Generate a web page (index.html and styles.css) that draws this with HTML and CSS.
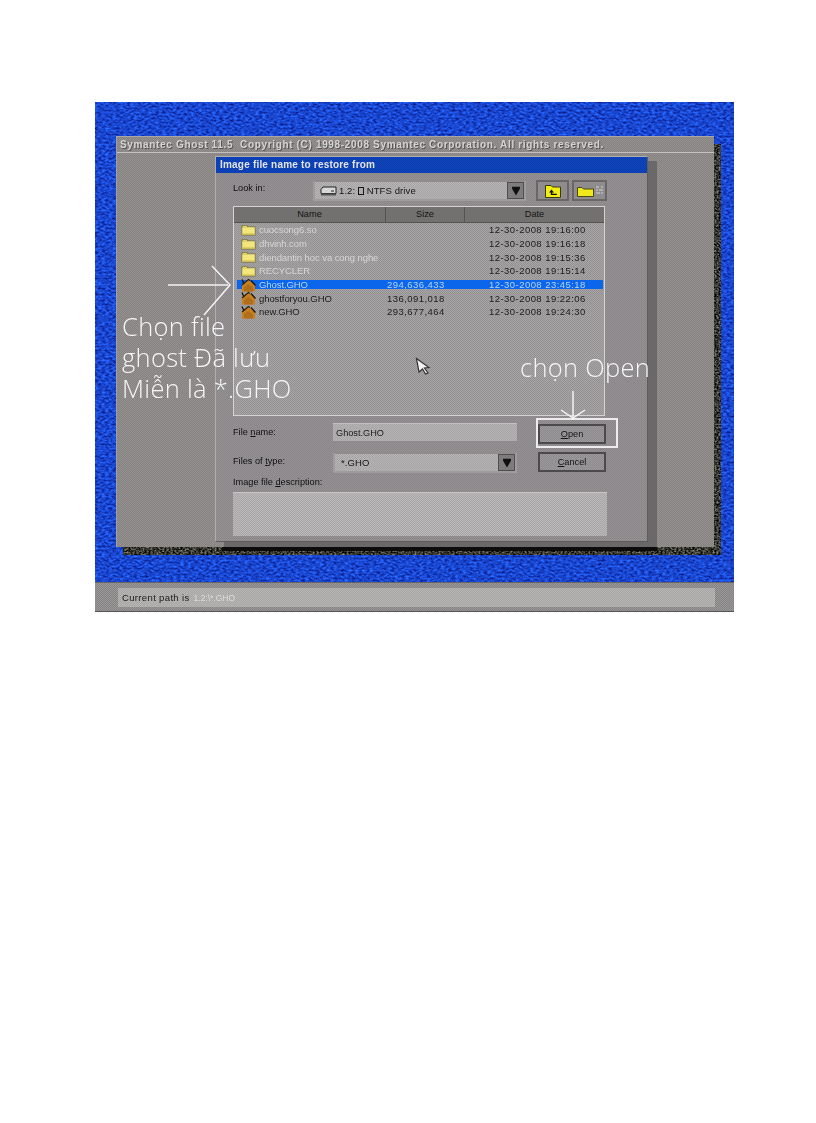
FILE: index.html
```html
<!DOCTYPE html>
<html lang="vi">
<head>
<meta charset="utf-8">
<title>Symantec Ghost</title>
<link rel="stylesheet" href="styles.css">
</head>
<body>
<svg class="defs" width="0" height="0" aria-hidden="true">
  <defs>
    <filter id="grain-blue" x="0" y="0" width="100%" height="100%" color-interpolation-filters="sRGB">
      <feTurbulence type="fractalNoise" baseFrequency=".28 .5" numOctaves="2" seed="7"/>
      <feColorMatrix type="matrix" values=".2 0 0 0 0  .55 0 0 0 0  .9 0 0 0 .36  0 0 0 0 1"/>
    </filter>
    <filter id="grain-dark" x="0" y="0" width="100%" height="100%" color-interpolation-filters="sRGB">
      <feTurbulence type="fractalNoise" baseFrequency=".5 .6" numOctaves="2" seed="3"/>
      <feColorMatrix type="matrix" values="1 0 0 0 -.28  1 0 0 0 -.28  .9 0 0 0 -.26  0 0 0 0 1"/>
    </filter>
  </defs>
  <symbol id="folder" viewBox="0 0 15 12">
    <path d="M0.500 11.500V2L1.500 1h4.500l1 1.500h7.500v9z" fill="#77703a"/>
    <path d="M1.200 10.800V3.200h12.600v7.600z" fill="#f2e67c"/>
    <path d="M1.200 3.200L2 1.800h3.500L6.500 3.200z" fill="#e4d468"/>
    <path d="M1.500 9.500h12v1.300h-12z" fill="#c8b850"/>
  </symbol>
  <symbol id="ghost" viewBox="0 0 15 14">
    <path d="M1 13.500V6.500L7 1.500l7 5.500v6.500z" fill="#c8801f"/>
    <path d="M3 13.500V9l4-3 5 3.500v4z" fill="#b06e1a"/>
    <path d="M1 1.500L3 6" stroke="#1a140a" stroke-width="1.300" fill="none"/>
    <path d="M1 7L7.500 1.500l1.500 1" stroke="#2a1e0c" stroke-width="1.100" fill="none"/>
    <path d="M10 2.500l4.500 5" stroke="#1a140a" stroke-width="1.300" fill="none"/>
  </symbol>
  <symbol id="down" viewBox="0 0 16 16">
    <path d="M3.500 3h9v2.500L8 13 3.500 5.500z" fill="#111"/>
  </symbol>
</svg>

<main class="shot">
  <div class="desktop">
    <section class="window">
      <header class="window-title">Symantec Ghost 11.5&nbsp;&nbsp;Copyright (C) 1998-2008 Symantec Corporation. All rights reserved.</header>
      <div class="window-body">
        <div class="dialog">
          <h1 class="dialog-title">Image file name to restore from</h1>
          <div class="dialog-content">
            <div class="lookin">
              <span class="label">Look in:</span>
              <div class="combo combo-drive">
                <svg class="drive" viewBox="0 0 18 10" width="18" height="10"><path d="M1 3.500L3 1h13v6.500H1z" fill="#d8d8d8" stroke="#222"/><path d="M1 7.500h15v2H1z" fill="#555"/><path d="M11 5h3" stroke="#222"/></svg>
                <span class="combo-text">1.2: <span class="box-glyph"></span> NTFS drive</span>
                <span class="combo-btn"><svg width="14" height="14"><use href="#down"/></svg></span>
              </div>
              <button class="tool tool-up" type="button">
                <svg viewBox="0 0 16 14" width="16" height="14"><path d="M0.500 13.500V1.500H6l1.500 1.500h8v10.500z" fill="#f2ee10" stroke="#3a3a10"/><path d="M6.500 5.500l-2.500 3h1.800v2.500h6v-1.200H7.300V8.500h1.700z" fill="#111"/></svg>
              </button>
              <button class="tool tool-new" type="button">
                <svg viewBox="0 0 26 12" width="26" height="12"><path d="M0.500 11.500V2.500H5L6.500 4h10v7.500z" fill="#f0e818" stroke="#4a4a18"/><path d="M19 2h3M24 2h2M19 5h2M22 5h4M19 8h4M24 8h2" stroke="#bcbcbc" stroke-width="1.400"/></svg>
              </button>
            </div>

            <div class="list">
              <div class="list-head">
                <span class="col-name">Name</span>
                <span class="col-size">Size</span>
                <span class="col-date">Date</span>
              </div>
              <div class="list-rows">
                <div class="row dir"><span class="name"><svg class="ico" width="15" height="12"><use href="#folder"/></svg>cuocsong6.so</span><span></span><span class="date">12-30-2008 19:16:00</span></div>
                <div class="row dir"><span class="name"><svg class="ico" width="15" height="12"><use href="#folder"/></svg>dhvinh.com</span><span></span><span class="date">12-30-2008 19:16:18</span></div>
                <div class="row dir"><span class="name"><svg class="ico" width="15" height="12"><use href="#folder"/></svg>diendantin hoc va cong nghe</span><span></span><span class="date">12-30-2008 19:15:36</span></div>
                <div class="row dir"><span class="name"><svg class="ico" width="15" height="12"><use href="#folder"/></svg>RECYCLER</span><span></span><span class="date">12-30-2008 19:15:14</span></div>
                <div class="row sel"><span class="name"><svg class="ico" width="15" height="14"><use href="#ghost"/></svg>Ghost.GHO</span><span>294,636,433</span><span class="date">12-30-2008 23:45:18</span></div>
                <div class="row"><span class="name"><svg class="ico" width="15" height="14"><use href="#ghost"/></svg>ghostforyou.GHO</span><span>136,091,018</span><span class="date">12-30-2008 19:22:06</span></div>
                <div class="row"><span class="name"><svg class="ico" width="15" height="14"><use href="#ghost"/></svg>new.GHO</span><span>293,677,464</span><span class="date">12-30-2008 19:24:30</span></div>
              </div>
            </div>

            <div class="form">
              <label class="label">File <u>n</u>ame:</label>
              <div class="input">Ghost.GHO</div>
              <button class="btn btn-open" type="button"><u>O</u>pen</button>
              <label class="label">Files of <u>t</u>ype:</label>
              <div class="combo combo-type">
                <span class="combo-text">*.GHO</span>
                <span class="combo-btn"><svg width="14" height="14"><use href="#down"/></svg></span>
              </div>
              <button class="btn btn-cancel" type="button"><u>C</u>ancel</button>
            </div>

            <div class="label desc-label">Image file <u>d</u>escription:</div>
            <div class="desc"></div>
          </div>
        </div>
      </div>
    </section>
  </div>
  <footer class="status">
    <div class="status-field">Current path is <span class="path">1.2:\*.GHO</span></div>
  </footer>

  <div class="note note-file">Chọn file<br>ghost Đã lưu<br>Miễn là *.GHO</div>
  <div class="note note-open">chọn Open</div>
  <div class="open-ring"></div>
  <svg class="arrow arrow-left" width="70" height="52" viewBox="0 0 70 52"><path d="M2 20H62M46 1L64 20 38 50" fill="none" stroke="#f4f4f4" stroke-width="1.500"/></svg>
  <svg class="arrow arrow-down" width="30" height="30" viewBox="0 0 30 30"><path d="M15 1V28M3 20L15 28 27 20" fill="none" stroke="#f4f4f4" stroke-width="1.500"/></svg>
  <svg class="cursor" width="16" height="18" viewBox="0 0 16 18"><path d="M1.500 1.500L14 10.500 9.500 11 13 16 10.500 17 7.500 12 4 15z" fill="#f2f2f2" stroke="#333" stroke-width="1.200"/></svg>
</main>
</body>
</html>
```

FILE: styles.css
```css
* { box-sizing: border-box; }
html, body { margin: 0; padding: 0; background: #fff; }
body { width: 816px; height: 1123px; overflow: hidden; font-family: "Liberation Sans", Arial, sans-serif; }
.defs { position: absolute; }

.shot {
  position: relative;
  width: 639px;
  height: 510px;
  margin: 102px 0 0 95px;
  display: flex;
  flex-direction: column;
}

.desktop {
  position: relative;
  height: 480px;
  padding: 34px 20px 0 21px;
  filter: blur(.35px);
}
.desktop::before {
  content: "";
  position: absolute;
  inset: 0;
  z-index: -1;
  background: #1548cc;
  filter: url(#grain-blue);
}

.window {
  position: relative;
  width: 598px;
  height: 411px;
  display: flex;
  flex-direction: column;
  background: repeating-conic-gradient(#85817f 0 25%, #969292 0 50%) 0 0 / 2px 2px;
  border-top: 1px solid #a8a6a6;
  border-left: 1px solid #a09e9e;
}
.window::before {
  content: "";
  position: absolute;
  inset: 7px -7px -8px 6px;
  z-index: -1;
  background: #3e3d3a;
  filter: url(#grain-dark);
}
.window-title {
  height: 16px;
  flex: none;
  padding-left: 3px;
  font-size: 10px;
  font-weight: 700;
  line-height: 15px;
  letter-spacing: .66px;
  white-space: nowrap;
  color: #d6d4d0;
  text-shadow: 1px 1px 0 #555;
  border-bottom: 1px solid #c4c2c0;
}
.window-body { flex: 1; padding: 3px 0 0 98px; }

.dialog {
  position: relative;
  width: 433px;
  height: 386px;
  display: flex;
  flex-direction: column;
  background: repeating-conic-gradient(#87858a 0 25%, #969392 0 50%) 0 0 / 2px 2px;
  border: 1px solid #b0aeae;
  border-right-color: #5e5c5c;
  border-bottom-color: #5e5c5c;
  box-shadow: 9px 5px 0 #6a6868;
}
.dialog::after {
  content: "";
  position: absolute;
  left: 6px;
  right: -10px;
  bottom: -10px;
  height: 4px;
  background: #0c0c0c;
}
.dialog-title {
  margin: 0;
  height: 16px;
  flex: none;
  padding-left: 4px;
  font-size: 10px;
  font-weight: 700;
  line-height: 16px;
  letter-spacing: .2px;
  color: #e4e4e8;
  background: repeating-conic-gradient(#0a3aaa 0 25%, #0f48c0 0 50%) 0 0 / 2px 2px;
}
.dialog-content { flex: 1; padding: 7px 0 0 17px; }

.label { font-size: 9.200px; font-weight: 400; color: #101010; }

.lookin { display: flex; align-items: stretch; height: 21px; }
.lookin .label { width: 80px; flex: none; line-height: 16px; }
.combo {
  display: flex;
  align-items: center;
  background: repeating-conic-gradient(#a6a4a4 0 25%, #b6b4b4 0 50%) 0 0 / 2px 2px;
  border: 2px solid #9e9c9c;
  border-top-color: #8e8c8c;
}
.combo-drive { width: 213px; padding-left: 5px; }
.drive { flex: none; margin-right: 1px; }
.combo-text { flex: 1; font-size: 9.500px; color: #161616; letter-spacing: .1px; white-space: nowrap; }
.box-glyph { display: inline-block; width: 6px; height: 8px; border: 1px solid #161616; vertical-align: -1px; }
.combo-btn {
  flex: none;
  width: 17px;
  height: 17px;
  display: flex;
  align-items: center;
  justify-content: center;
  background: #7e7c7c;
  border: 1px solid #504e4e;
}
.tool {
  flex: none;
  padding: 0;
  display: flex;
  align-items: center;
  justify-content: center;
  background: #8e8c8c;
  border: 2px solid #686666;
}
.tool-up { width: 33px; margin-left: 10px; }
.tool-new { width: 35px; margin-left: 3px; }

.list {
  width: 372px;
  height: 210px;
  margin-top: 5px;
  display: flex;
  flex-direction: column;
  background: repeating-conic-gradient(#949292 0 25%, #a6a4a4 0 50%) 0 0 / 2px 2px;
  border: 1px solid #d4d2d2;
}
.list-head {
  height: 16px;
  flex: none;
  display: grid;
  grid-template-columns: 151px 80px 1fr;
  font-size: 9.200px;
  line-height: 15px;
  text-align: center;
  color: #141414;
  background: #737170;
  border-bottom: 1px solid #545252;
}
.col-size { border-left: 1px solid #545252; border-right: 1px solid #545252; }
.list-rows { padding: 0 1px 0 3px; }
.row {
  display: grid;
  grid-template-columns: 150px 102px 1fr;
  height: 13.700px;
  align-items: center;
  font-size: 9.500px;
  letter-spacing: .45px;
  white-space: nowrap;
  color: #1c1c1c;
}
.name { display: flex; align-items: center; padding-left: 4px; letter-spacing: -.08px; }
.ico { flex: none; margin: -1px 3px -1px 0; }
.dir .name { color: #d8d6d6; }
.sel {
  color: #b8d4f8;
  background: linear-gradient(#0b66ec, #0b66ec) center / 100% 9px no-repeat;
}

.form {
  display: grid;
  grid-template-columns: 100px 184px 21px 68px;
  grid-template-rows: 21px 21px;
  row-gap: 8px;
  margin-top: 7px;
}
.form .label { line-height: 18px; }
.input {
  grid-column: 2;
  height: 18px;
  padding-left: 3px;
  font-size: 9.200px;
  line-height: 18px;
  color: #1c1c1c;
  background: repeating-conic-gradient(#a6a4a4 0 25%, #b6b4b4 0 50%) 0 0 / 2px 2px;
  border-top: 1px solid #c2c0c0;
}
.combo-type { grid-column: 2; height: 21px; padding-left: 6px; }
.btn {
  grid-column: 4;
  padding: 0;
  height: 20px;
  font: 9.200px "Liberation Sans", Arial, sans-serif;
  color: #141414;
  background: repeating-conic-gradient(#8c8a8e 0 25%, #9c9a9a 0 50%) 0 0 / 2px 2px;
  border: 2px solid #4c4a4a;
}
.btn-open { margin-top: 1px; }
.btn-cancel { margin-top: 0; }

.desc-label { height: 19px; line-height: 18px; }
.desc {
  width: 374px;
  height: 44px;
  background: repeating-conic-gradient(#a8a6a6 0 25%, #bab8b8 0 50%) 0 0 / 2px 2px;
  border-top: 1px solid #c8c6c6;
}

.status {
  height: 30px;
  padding: 5px 19px 0 23px;
  background: repeating-conic-gradient(#868484 0 25%, #989696 0 50%) 0 0 / 2px 2px;
  border-top: 1px solid #666;
  border-bottom: 1px solid #555;
  filter: blur(.35px);
}
.status-field {
  height: 19px;
  padding-left: 4px;
  font-size: 9.500px;
  line-height: 19px;
  letter-spacing: .35px;
  color: #1a1a1a;
  background: repeating-conic-gradient(#a8a6a4 0 25%, #b8b6b4 0 50%) 0 0 / 2px 2px;
}
.path { margin-left: 1px; font-size: 8.500px; letter-spacing: 0; color: #dcdcdc; }

.note {
  position: absolute;
  font-family: "Open Sans", "DejaVu Sans", sans-serif;
  font-weight: 300;
  font-size: 25.500px;
  letter-spacing: .3px;
  line-height: 31px;
  color: #f6f6f6;
  white-space: nowrap;
}
.note-file { left: 27px; top: 209px; }
.note-open { left: 425px; top: 250px; }
.open-ring {
  position: absolute;
  left: 441px;
  top: 316px;
  width: 82px;
  height: 30px;
  border: 2px solid #ececec;
}
.arrow, .cursor { position: absolute; }
.arrow-left { left: 71px; top: 163px; }
.arrow-down { left: 463px; top: 288px; }
.cursor { left: 320px; top: 255px; }
```
